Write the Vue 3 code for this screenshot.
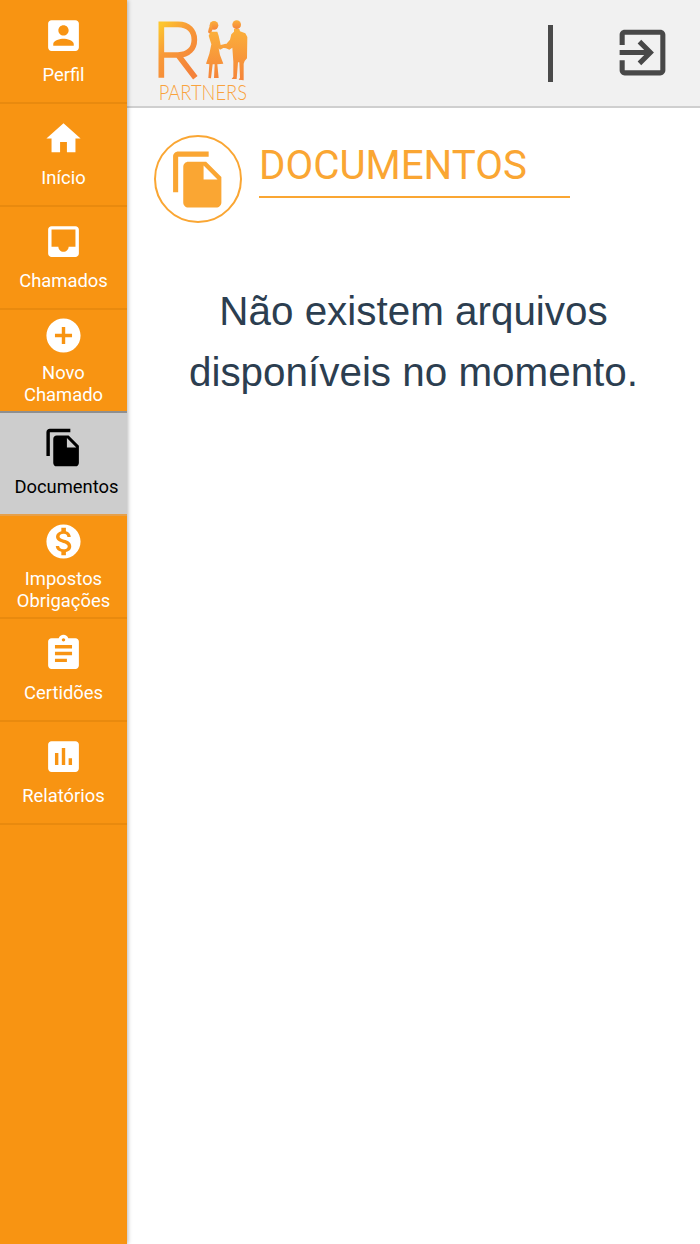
<script setup>
const icons = {
  perfil: 'M3 5v14c0 1.1.89 2 2 2h14c1.1 0 2-.9 2-2V5c0-1.1-.9-2-2-2H5c-1.11 0-2 .9-2 2zm12 4c0 1.66-1.34 3-3 3s-3-1.34-3-3 1.34-3 3-3 3 1.34 3 3zm-9 8c0-2 4-3.1 6-3.1s6 1.1 6 3.1v1H6v-1z',
  home: 'M10 20v-6h4v6h5v-8h3L12 3 2 12h3v8z',
  inbox: 'M19 3H4.99c-1.11 0-1.98.89-1.98 2L3 19c0 1.1.88 2 1.99 2H19c1.1 0 2-.9 2-2V5c0-1.11-.9-2-2-2zm0 12h-4c0 1.66-1.35 3-3 3s-3-1.34-3-3H4.99V5H19v10z',
  add: 'M12 2C6.48 2 2 6.48 2 12s4.48 10 10 10 10-4.48 10-10S17.52 2 12 2zm5 11h-4v4h-2v-4H7v-2h4V7h2v4h4v2z',
  copy: 'M16 1H4c-1.1 0-2 .9-2 2v14h2V3h12V1zm-1 4l6 6v10c0 1.1-.9 2-2 2H7.99C6.89 23 6 22.1 6 21l.01-14c0-1.1.89-2 1.99-2h7zm-1 7h5.5L14 6.5V12z',
  money: 'M12 2C6.48 2 2 6.48 2 12s4.48 10 10 10 10-4.48 10-10S17.52 2 12 2zm1.41 16.09V20h-2.67v-1.93c-1.71-.36-3.16-1.46-3.27-3.4h1.96c.1 1.05.82 1.87 2.65 1.87 1.96 0 2.4-.98 2.4-1.59 0-.83-.44-1.61-2.67-2.14-2.48-.6-4.18-1.62-4.18-3.67 0-1.72 1.39-2.84 3.11-3.21V4h2.67v1.95c1.86.45 2.79 1.86 2.85 3.39H14.3c-.05-1.11-.64-1.87-2.22-1.87-1.5 0-2.4.68-2.4 1.64 0 .84.65 1.39 2.67 1.91s4.18 1.39 4.18 3.91c-.01 1.83-1.38 2.83-3.12 3.16z',
  assignment: 'M19 3h-4.18C14.4 1.84 13.3 1 12 1c-1.3 0-2.4.84-2.82 2H5c-1.1 0-2 .9-2 2v14c0 1.1.9 2 2 2h14c1.1 0 2-.9 2-2V5c0-1.1-.9-2-2-2zm-7 0c.55 0 1 .45 1 1s-.45 1-1 1-1-.45-1-1 .45-1 1-1zm2 14H7v-2h7v2zm3-4H7v-2h10v2zm0-4H7V7h10v2z',
  chart: 'M19 3H5c-1.1 0-2 .9-2 2v14c0 1.1.9 2 2 2h14c1.1 0 2-.9 2-2V5c0-1.1-.9-2-2-2zM9 17H7v-7h2v7zm4 0h-2V7h2v10zm4 0h-2v-4h2v4z',
  exit: 'M10.09 15.59L11.5 17l5-5-5-5-1.41 1.41L12.67 11H3v2h9.67l-2.58 2.59zM19 3H5c-1.11 0-2 .9-2 2v4h2V5h14v14H5v-4H3v4c0 1.1.89 2 2 2h14c1.1 0 2-.9 2-2V5c0-1.1-.9-2-2-2z'
}

const menu = [
  { lines: ['Perfil'], icon: icons.perfil },
  { lines: ['Início'], icon: icons.home },
  { lines: ['Chamados'], icon: icons.inbox },
  { lines: ['Novo', 'Chamado'], icon: icons.add },
  { lines: ['Documentos'], icon: icons.copy, active: true },
  { lines: ['Impostos', 'Obrigações'], icon: icons.money },
  { lines: ['Certidões'], icon: icons.assignment },
  { lines: ['Relatórios'], icon: icons.chart }
]
</script>

<template>
  <div class="shell">
    <nav class="sidebar">
      <a
        v-for="item in menu"
        :key="item.lines.join(' ')"
        class="item"
        :class="{ two: item.lines.length > 1, active: item.active }"
      >
        <svg class="item-icon" viewBox="0 0 24 24"><path :d="item.icon" /></svg>
        <span class="label">
          <span v-for="line in item.lines" :key="line" class="line">{{ line }}</span>
        </span>
      </a>
    </nav>

    <div class="main">
      <header class="topbar">
        <svg class="logo" viewBox="0 0 390 330" role="img" aria-label="RH Partners">
          <defs>
            <linearGradient id="logoGrad" x1="0" y1="0" x2="0.7" y2="1">
              <stop offset="0" stop-color="#fdc62f" />
              <stop offset="0.4" stop-color="#f89a38" />
              <stop offset="1" stop-color="#f4823a" />
            </linearGradient>
            <linearGradient id="peopleGrad" x1="0" y1="0" x2="0" y2="1">
              <stop offset="0" stop-color="#fbb03b" />
              <stop offset="1" stop-color="#f5843a" />
            </linearGradient>
          </defs>
          <path
            fill="none"
            stroke="url(#logoGrad)"
            stroke-width="17"
            d="M64 218V58h50c32 0 49 20 49 46s-17 46-49 46H64M114 150l52 68"
          />
          <g fill="url(#peopleGrad)">
            <circle cx="222" cy="61" r="13" />
            <path d="M213 52 L206 72 L204 82 L212 88 L218 72 Z" />
            <path d="M212 80 L232 80 L236 92 L242 120 L258 116 L260 124 L240 134 L236 130 L240 150 L250 176 L232 178 L236 219 L222 219 L224 178 L218 178 L213 220 L205 219 L208 178 L198 176 L208 146 L214 118 L206 92 Z" />
            <circle cx="290" cy="59" r="13" />
            <path d="M282 72 L298 72 L300 79 L316 85 L322 96 L321 160 L314 168 L311 176 L311 226 L296 224 L300 218 L298 172 L294 172 L290 222 L275 222 L280 215 L280 170 L277 128 L268 134 L258 130 L246 128 L245 122 L258 118 L270 104 L274 88 L282 80 Z" />
          </g>
          <text class="logo-word" x="56" y="285" textLength="265" lengthAdjust="spacingAndGlyphs">PARTNERS</text>
        </svg>
        <span class="divider"></span>
        <svg class="exit" viewBox="0 0 24 24"><path :d="icons.exit" /></svg>
      </header>

      <main class="content">
        <div class="heading">
          <span class="badge">
            <svg viewBox="0 0 24 24"><path :d="icons.copy" /></svg>
          </span>
          <h1 class="title">DOCUMENTOS</h1>
        </div>
        <p class="message">Não existem arquivos disponíveis no momento.</p>
      </main>
    </div>
  </div>
</template>

<style>
html, body { margin: 0; background: #fff; }
</style>

<style scoped>
.shell {
  display: flex;
  width: 700px;
  height: 1244px;
  overflow: hidden;
  background: #fff;
}

.sidebar {
  position: relative;
  z-index: 2;
  flex: 0 0 127px;
  box-sizing: border-box;
  padding-top: 1px;
  display: flex;
  flex-direction: column;
  background: #f89412;
  box-shadow: 1px 0 4px rgba(0, 0, 0, 0.28);
  font-family: Roboto, sans-serif;
}

.item {
  box-sizing: border-box;
  height: 103px;
  display: flex;
  flex-direction: column;
  align-items: center;
  gap: 8px;
  padding-top: 14px;
  border-bottom: 2px solid #e98a0e;
  color: #fff;
  fill: #fff;
}
.item.two { padding-top: 5px; gap: 6px; }
.item.active {
  background: #cdcdcd;
  color: #000;
  fill: #000;
  border-top: 2px solid #8f8f8f;
  margin-top: -2px;
  height: 105px;
  padding-top: 14px;
  border-bottom-color: #e6a04a;
}
.item-icon { width: 41px; height: 41px; display: block; flex: none; }
.label {
  font-size: 18.4px;
  line-height: 22px;
  text-align: center;
}
.line { display: block; white-space: nowrap; }
.active .label { padding-left: 6px; }

.main { flex: 1; min-width: 0; display: flex; flex-direction: column; }

.topbar {
  box-sizing: border-box;
  height: 108px;
  flex: none;
  display: flex;
  align-items: flex-start;
  background: #f1f1f1;
  border-bottom: 2px solid #cfcfcf;
}
.logo { width: 130px; height: 110px; margin: 5px 0 0 13px; flex: none; overflow: visible; }
.logo-word {
  font-family: Lato, Roboto, sans-serif;
  font-weight: 300;
  font-size: 64px;
  fill: #f9a23c;
}
.divider {
  width: 5px;
  height: 57px;
  margin: 25px 0 0 278px;
  background: #4a4a4a;
  flex: none;
}
.exit { width: 61px; height: 61px; margin: 22px 0 0 59px; fill: #484848; flex: none; }

.content { flex: 1; }

.heading {
  display: flex;
  align-items: flex-start;
  padding: 27px 0 0 27px;
}
.badge {
  box-sizing: border-box;
  width: 88px;
  height: 88px;
  border: 2px solid #faa633;
  border-radius: 50%;
  display: flex;
  align-items: center;
  justify-content: center;
  flex: none;
}
.badge svg { width: 61px; height: 61px; fill: #faa633; }
.title {
  box-sizing: border-box;
  width: 311px;
  height: 63px;
  margin: 0 0 0 17px;
  padding-top: 7px;
  border-bottom: 2px solid #faa633;
  font-family: Roboto, sans-serif;
  font-weight: 400;
  font-size: 40.3px;
  line-height: 48px;
  color: #faa633;
}
.message {
  margin: 58px auto 0;
  width: 480px;
  font-family: "Liberation Sans", Arial, sans-serif;
  font-size: 40.4px;
  line-height: 61px;
  text-align: center;
  color: #2c3e50;
}
</style>
